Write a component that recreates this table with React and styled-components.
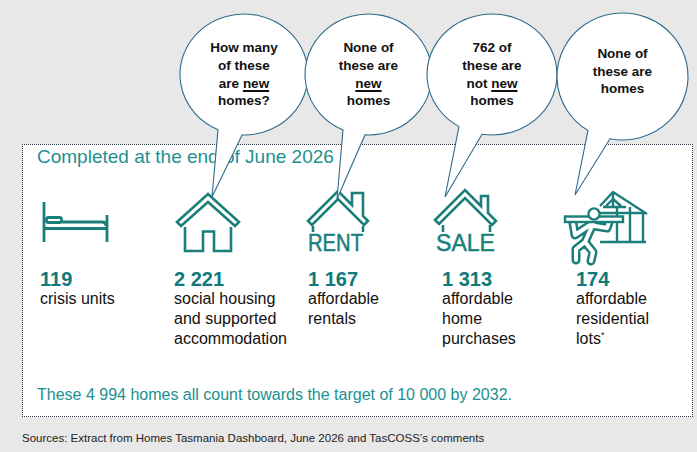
import styled, { createGlobalStyle } from 'styled-components'

//Colours
const iconTeal = '#1a7f7b'
const numberTeal = '#10797a'
const lightTeal = '#1c9190'
const bubbleBlue = '#2e6a8c'

//Styled components declarations
const GlobalStyle = createGlobalStyle`
    body {
        margin: 0;
        background-color: #e8e8e8;
        font-family: 'Liberation Sans', Arial, sans-serif;
    }
`

const Page = styled.div`
    position: relative;
    width: 697px;
    height: 452px;
    box-sizing: border-box;
    padding: 144px 0 0 22px;
    overflow: hidden;
`

const Panel = styled.section`
    display: flex;
    flex-direction: column;
    width: 671px;
    height: 273px;
    box-sizing: border-box;
    padding: 1px 0 11px 14px;
    border: 1px dotted #2b3440;
    background-color: white;
`

const Title = styled.h2`
    margin: 0;
    font-size: 19px;
    font-weight: normal;
    line-height: 22px;
    color: ${lightTeal};
`

const Stats = styled.div`
    display: grid;
    grid-template-columns: repeat(5, 134px);
    margin: 18px 0 0 3px;
`

const Stat = styled.div`
    display: flex;
    flex-direction: column;
`

const IconBox = styled.svg`
    display: block;
    width: 90px;
    height: 76px;
    margin-left: -12px;
    overflow: visible;
`

const Value = styled.div`
    margin-top: 7px;
    font-size: 20px;
    font-weight: bold;
    line-height: 20px;
    color: ${numberTeal};
`

const Label = styled.div`
    font-size: 16px;
    line-height: 20px;
    color: #111;

    sup {
        font-size: 9px;
        line-height: 0;
    }
`

const Footer = styled.p`
    margin: auto 0 0;
    font-size: 16px;
    line-height: 20px;
    color: ${lightTeal};
`

const Sources = styled.p`
    margin: 14px 0 0;
    font-size: 11.5px;
    line-height: 14px;
    color: #222;
`

const Callout = styled.div`
    position: absolute;
    left: ${(p) => p.$left}px;
    top: ${(p) => p.$top}px;
    width: ${(p) => p.$width}px;
    height: ${(p) => p.$height}px;
    z-index: ${(p) => p.$layer};
`

const CalloutShape = styled.svg`
    position: absolute;
    inset: 0;
    overflow: visible;
`

const CalloutText = styled.div`
    position: absolute;
    left: 0;
    top: ${(p) => p.$dy}px;
    width: 100%;
    height: ${(p) => p.$height}px;
    display: flex;
    flex-direction: column;
    align-items: center;
    justify-content: center;
    font-size: 13.5px;
    font-weight: bold;
    line-height: 17.7px;
    color: #111;
    text-align: center;

    u {
        text-decoration-thickness: 1.5px;
        text-underline-offset: 2px;
    }
`

//Icons, drawn in page coordinates (x from column start - 12, y from 186)
const iconBox = (colLeft) => `${colLeft - 12} 186 90 76`

const BedIcon = ({ x }) => (
    <IconBox viewBox={iconBox(x)}>
        <g stroke={iconTeal} strokeWidth="2.8" fill="none">
            <path d="M44 202 V242 M107 215 V242 M44 228.5 H107" />
            <path d="M62 222 H102 Q106 222 106 226" />
            <rect x="46.5" y="217.5" width="15" height="5" rx="2" />
        </g>
    </IconBox>
)

const HouseIcon = ({ x }) => (
    <IconBox viewBox={iconBox(x)}>
        <g stroke={iconTeal} strokeWidth="2.6" fill="none" strokeLinejoin="miter">
            <path d="M177 222 L208 194 L239 222 L235 226 L208 202 L181 226 Z" />
            <path d="M185 227 V251 H203 V231.5 H214 V251 H231 V227" />
        </g>
    </IconBox>
)

const RoofWord = ({ x, roof, walls, word, wordX, wordLen }) => (
    <IconBox viewBox={iconBox(x)}>
        <g stroke={iconTeal} strokeWidth="2.6" fill="none">
            <path d={roof} />
            <path d={walls} />
        </g>
        <text
            x={wordX}
            y="251"
            fontSize="23"
            fontFamily="'Liberation Sans', Arial, sans-serif"
            fill={iconTeal}
            stroke={iconTeal}
            strokeWidth="0.5"
            textLength={wordLen}
            lengthAdjust="spacingAndGlyphs"
        >
            {word}
        </text>
    </IconBox>
)

// figure carrying the plank, drawn as a thick teal stroke with a white core
const personPath =
    'M593 224 L585 242 M585 242 L576 249 L576 260 M585 242 L593 252 L591 261 M590 225 L575 235 L573 223 M595 226 L607 228 L609 222'

const BuilderIcon = ({ x }) => (
    <IconBox viewBox={iconBox(x)}>
        <g stroke={iconTeal} strokeWidth="2.4" fill="none" strokeLinejoin="round">
            <path d="M600 206 L613 192 L647 214 M613 192 V207 M603 207 H626 M606 206 L613 199 L621 206" />
            <path d="M600 213 H645 M643 213 V242 M600 242 H646 M617 207 V242 M630 207 V242" />
        </g>
        <g fill="none" strokeLinecap="round" strokeLinejoin="round">
            <path d={personPath} stroke={iconTeal} strokeWidth="9" />
            <path d={personPath} stroke="white" strokeWidth="4" />
        </g>
        <rect x="565" y="216.5" width="58" height="5.5" stroke={iconTeal} strokeWidth="2.4" fill="white" />
        <circle cx="594" cy="214" r="5.6" stroke={iconTeal} strokeWidth="2.4" fill="white" />
    </IconBox>
)

//Data
const stats = [
    { value: '119', label: ['crisis units'], icon: (x) => <BedIcon x={x} /> },
    {
        value: '2 221',
        label: ['social housing', 'and supported', 'accommodation'],
        icon: (x) => <HouseIcon x={x} />,
    },
    {
        value: '1 167',
        label: ['affordable', 'rentals'],
        icon: (x) => (
            <RoofWord
                x={x}
                roof="M308 221 L338 191 L352 205 V193 H363 V216 L368 221 L364 225 L338 199 L312 225 Z"
                walls="M313 226 V232 M363 226 V232"
                word="RENT"
                wordX="308"
                wordLen="55"
            />
        ),
    },
    {
        value: '1 313',
        label: ['affordable', 'home', 'purchases'],
        icon: (x) => (
            <RoofWord
                x={x}
                roof="M435 220 L465 190 L481 206 V196 H488 V213 L496 221 L492 225 L465 198 L439 224 Z"
                walls="M443 225 V232 M490 225 V232"
                word="SALE"
                wordX="436"
                wordLen="59"
            />
        ),
    },
    {
        value: '174',
        label: ['affordable', 'residential', 'lots'],
        star: true,
        icon: (x) => <BuilderIcon x={x} />,
    },
]

const bubbles = [
    {
        cx: 244, cy: 74.5, rx: 64, ry: 60.5, ax: 218, bx: 242, tip: [212, 197], dy: 0,
        lines: ['How many', 'of these', <>are <u>new</u></>, 'homes?'],
    },
    {
        cx: 368.5, cy: 74.5, rx: 63.5, ry: 60.5, ax: 343, bx: 365, tip: [337, 199], dy: 0,
        lines: ['None of', 'these are', <u>new</u>, 'homes'],
    },
    {
        cx: 492, cy: 74.5, rx: 65, ry: 60.5, ax: 459, bx: 482, tip: [445, 197], dy: 0,
        lines: ['762 of', 'these are', <>not <u>new</u></>, 'homes'],
    },
    {
        cx: 622.5, cy: 76.5, rx: 65.5, ry: 63.5, ax: 588, bx: 610, tip: [575, 195], dy: -5,
        lines: ['None of', 'these are', 'homes'],
    },
]

const ellipseY = (b, x) => b.cy + b.ry * Math.sqrt(1 - ((x - b.cx) / b.rx) ** 2)

const SpeechBubble = ({ bubble, layer }) => {
    const left = bubble.cx - bubble.rx - 1
    const top = bubble.cy - bubble.ry - 1
    const width = bubble.rx * 2 + 2
    const height = bubble.tip[1] - top + 2
    const ay = ellipseY(bubble, bubble.ax)
    const by = ellipseY(bubble, bubble.bx)
    const d = `M${bubble.ax} ${ay} A${bubble.rx} ${bubble.ry} 0 1 1 ${bubble.bx} ${by} L${bubble.tip[0]} ${bubble.tip[1]} Z`

    return (
        <Callout $left={left} $top={top} $width={width} $height={height} $layer={layer}>
            <CalloutShape width={width} height={height} viewBox={`${left} ${top} ${width} ${height}`}>
                <path d={d} fill="white" stroke={bubbleBlue} strokeWidth="1.1" />
            </CalloutShape>
            <CalloutText $dy={bubble.dy} $height={bubble.ry * 2 + 2}>
                {bubble.lines.map((line, i) => (
                    <span key={i}>{line}</span>
                ))}
            </CalloutText>
        </Callout>
    )
}

const App = () => {
    return (
        <Page>
            <GlobalStyle />
            <Panel>
                <Title>Completed at the end of June 2026</Title>
                <Stats>
                    {stats.map((stat, i) => (
                        <Stat key={stat.value}>
                            {stat.icon(40 + i * 134)}
                            <Value>{stat.value}</Value>
                            <Label>
                                {stat.label.map((line, j) => (
                                    <div key={line}>
                                        {line}
                                        {stat.star && j === stat.label.length - 1 && <sup>*</sup>}
                                    </div>
                                ))}
                            </Label>
                        </Stat>
                    ))}
                </Stats>
                <Footer>These 4 994 homes all count towards the target of 10 000 by 2032.</Footer>
            </Panel>
            <Sources>Sources: Extract from Homes Tasmania Dashboard, June 2026 and TasCOSS’s comments</Sources>
            {bubbles.map((bubble, i) => (
                <SpeechBubble key={i} bubble={bubble} layer={i + 1} />
            ))}
        </Page>
    )
}

export default App
